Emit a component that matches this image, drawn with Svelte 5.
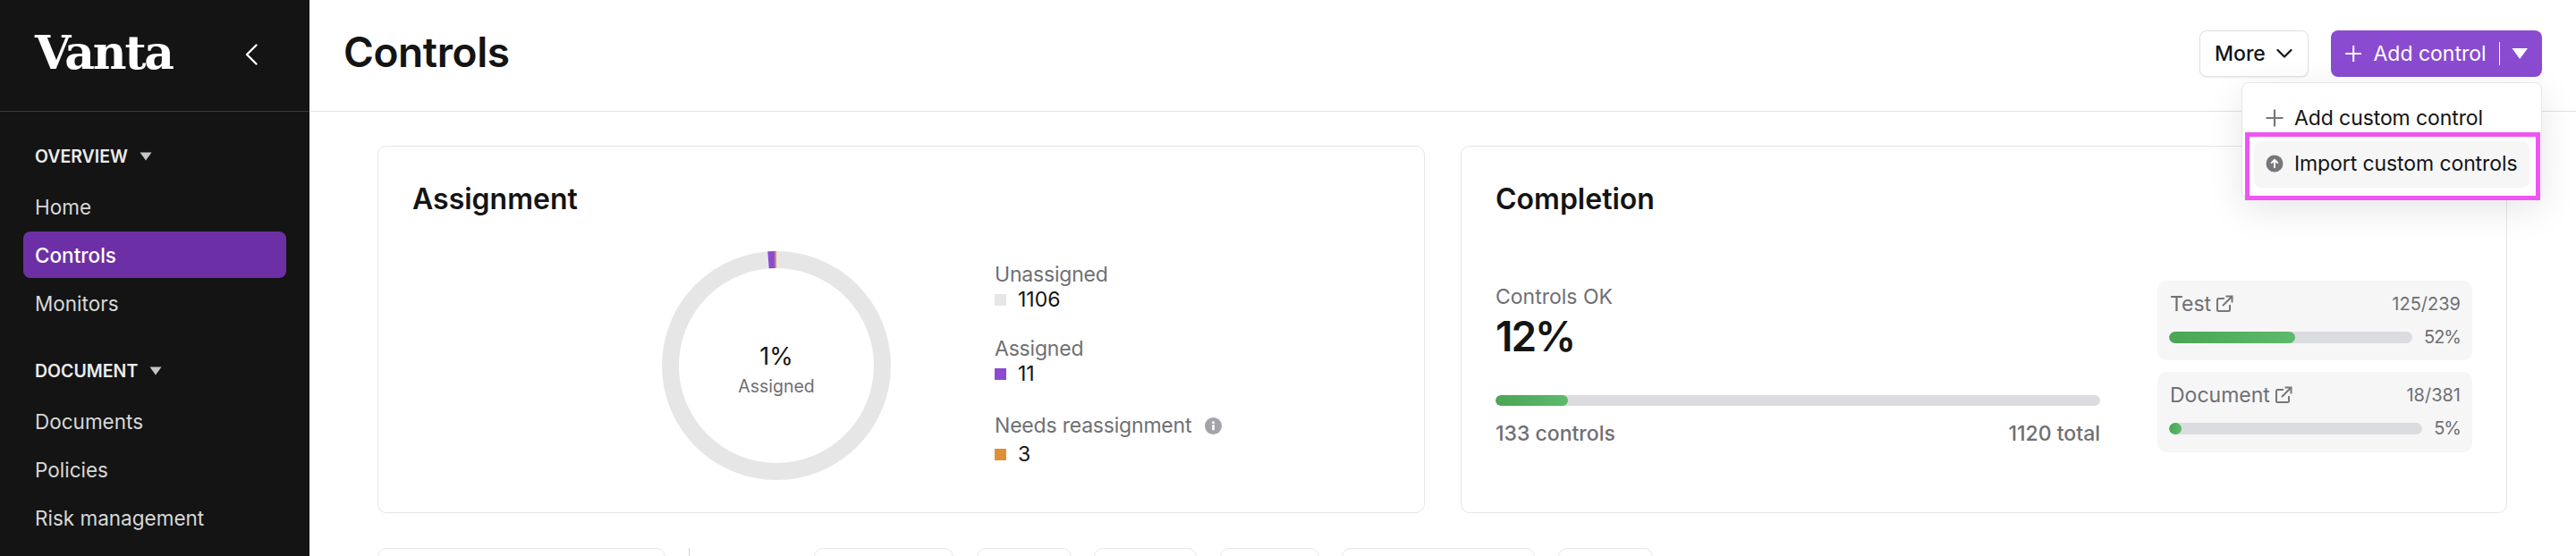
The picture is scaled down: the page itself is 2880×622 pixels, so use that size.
<script>
  const navGroups = [
    { title: 'OVERVIEW', items: ['Home', 'Controls', 'Monitors'] },
    { title: 'DOCUMENT', items: ['Documents', 'Policies', 'Risk management'] }
  ];

  const legend = [
    { label: 'Unassigned', value: 1106, color: '#e6e6e6' },
    { label: 'Assigned', value: 11, color: '#8a4bd0' },
    { label: 'Needs reassignment', value: 3, color: '#dd9038', info: true }
  ];

  const subStats = [
    { label: 'Test', count: '125/239', pct: 52 },
    { label: 'Document', count: '18/381', pct: 5 }
  ];

  const chips = [156, 106, 115, 111, 216, 106];

  // donut geometry, segments run back from 12 o'clock
  const radius = 118.5;
  const circ = 2 * Math.PI * radius;
  const total = 1120;
  const orangeLen = (3 / total) * circ;
  const purpleLen = (11 / total) * circ;
</script>

<div class="page">
  <aside class="sidebar">
    <div class="brand">
      <span class="logo">Vanta</span>
      <svg class="collapse" width="14" height="24" viewBox="0 0 14 24" fill="none" stroke="#fff" stroke-width="2.4" stroke-linecap="round" stroke-linejoin="round">
        <path d="M12.5 1.5 2 12l10.5 10.5" />
      </svg>
    </div>
    <nav class="nav">
      {#each navGroups as group}
        <section class="group">
          <div class="group-title">
            {group.title}
            <svg width="14" height="10" viewBox="0 0 14 10"><path d="M0.5 0.5h13L7 9.5z" fill="#c6c6c6" /></svg>
          </div>
          {#each group.items as item}
            <a class="nav-item" class:active={item === 'Controls'} href="#top">{item}</a>
          {/each}
        </section>
      {/each}
    </nav>
  </aside>

  <main class="main">
    <header class="topbar">
      <h1>Controls</h1>
      <div class="actions">
        <button class="btn-more">
          More
          <svg width="18" height="12" viewBox="0 0 18 12" fill="none" stroke="#141414" stroke-width="2.2" stroke-linecap="round" stroke-linejoin="round"><path d="M1.5 2 9 9.5 16.5 2" /></svg>
        </button>
        <button class="btn-add">
          <svg width="20" height="20" viewBox="0 0 20 20" fill="none" stroke="#fff" stroke-width="2.2" stroke-linecap="round"><path d="M10 1v18M1 10h18" /></svg>
          <span>Add control</span>
          <i class="btn-divider"></i>
          <svg width="20" height="14" viewBox="0 0 20 14"><path d="M0.5 0.5h19L10 13.5z" fill="#fff" /></svg>
        </button>
      </div>

      <div class="menu">
        <div class="menu-item">
          <svg width="20" height="20" viewBox="0 0 20 20" fill="none" stroke="#77777b" stroke-width="2.2"><path d="M10 0.5v19M0.5 10h19" /></svg>
          Add custom control
        </div>
        <div class="menu-item hover">
          <svg width="20" height="20" viewBox="0 0 20 20">
            <circle cx="10" cy="10" r="9.5" fill="#77777b" />
            <path d="M10 15V6M6.2 9.6 10 5.8l3.8 3.8" fill="none" stroke="#fff" stroke-width="2" />
          </svg>
          Import custom controls
        </div>
      </div>
      <div class="callout"></div>
    </header>

    <div class="content">
      <div class="cards">
        <section class="card">
          <h2>Assignment</h2>
          <div class="assign-row">
            <div class="donut">
              <svg width="256" height="256" viewBox="0 0 256 256" fill="none" stroke-width="19">
                <circle cx="128" cy="128" r={radius} stroke="#e6e6e6" />
                <g transform="rotate(-90 128 128)">
                  <circle cx="128" cy="128" r={radius} stroke="#dd9038" stroke-dasharray="{orangeLen} {circ - orangeLen}" stroke-dashoffset={orangeLen} />
                  <circle cx="128" cy="128" r={radius} stroke="#8a4bd0" stroke-dasharray="{purpleLen} {circ - purpleLen}" stroke-dashoffset={orangeLen + purpleLen} />
                </g>
              </svg>
              <div class="donut-label">
                <strong>1%</strong>
                <span>Assigned</span>
              </div>
            </div>
            <ul class="legend">
              {#each legend as row}
                <li>
                  <div class="legend-label">
                    {row.label}
                    {#if row.info}
                      <svg width="19" height="19" viewBox="0 0 19 19">
                        <circle cx="9.5" cy="9.5" r="9.5" fill="#a3a3a8" />
                        <rect x="8.2" y="8.2" width="2.6" height="6" fill="#fff" />
                        <rect x="8.2" y="4.4" width="2.6" height="2.6" fill="#fff" />
                      </svg>
                    {/if}
                  </div>
                  <div class="legend-value"><i style="background:{row.color}"></i>{row.value}</div>
                </li>
              {/each}
            </ul>
          </div>
        </section>

        <section class="card">
          <h2>Completion</h2>
          <div class="completion-row">
            <div class="overall">
              <div class="overall-label">Controls OK</div>
              <div class="overall-pct">12%</div>
              <div class="track big"><div class="fill" style="width:12%"></div></div>
              <div class="overall-foot"><span>133 controls</span><span>1120 total</span></div>
            </div>
            <div class="subs">
              {#each subStats as stat}
                <div class="sub">
                  <div class="sub-top">
                    <span class="sub-name">
                      {stat.label}
                      <svg width="20" height="20" viewBox="0 0 20 20" fill="none" stroke="#77777b" stroke-width="2">
                        <path d="M10 4H3.5A1.5 1.5 0 0 0 2 5.500V16.500A1.500 1.500 0 0 0 3.500 18H14.500A1.500 1.500 0 0 0 16 16.500V11" />
                        <path d="M8 12 18 2M11.500 1.500H18.500V8.500" />
                      </svg>
                    </span>
                    <span>{stat.count}</span>
                  </div>
                  <div class="sub-bar">
                    <div class="track"><div class="fill" style="width:{stat.pct}%"></div></div>
                    <span>{stat.pct}%</span>
                  </div>
                </div>
              {/each}
            </div>
          </div>
        </section>
      </div>

      <div class="filters">
        <div class="search"></div>
        <div class="filter-divider"></div>
        <div class="chips">
          {#each chips as width}
            <div class="chip" style="width:{width}px"></div>
          {/each}
        </div>
      </div>
    </div>
  </main>
</div>

<style>
  :global(body) {
    margin: 0;
    background: #fff;
    font-family: Inter, "Noto Sans", sans-serif;
    color: #141414;
  }

  .page {
    display: flex;
    height: 622px;
    overflow: hidden;
  }

  .sidebar {
    width: 346px;
    flex-shrink: 0;
    background: #141414;
    color: #d8d8d8;
  }

  .brand {
    height: 124px;
    box-sizing: content-box;
    border-bottom: 1px solid #3a3a3a;
    display: flex;
    align-items: center;
    justify-content: space-between;
    padding: 0 58px 0 39px;
  }

  .logo {
    font-family: "DejaVu Serif", serif;
    font-weight: 700;
    font-size: 52px;
    letter-spacing: -2.2px;
    color: #fff;
    line-height: 1;
    margin-top: -6px;
  }

  .collapse {
    margin-top: -2px;
  }

  .nav {
    padding: 35px 26px 0;
  }

  .group {
    margin-bottom: 35px;
  }

  .group-title {
    display: flex;
    align-items: center;
    gap: 13px;
    height: 30px;
    padding-left: 13px;
    margin-bottom: 15px;
    font-size: 19.5px;
    font-weight: 600;
    color: #ececec;
  }

  .nav-item {
    display: flex;
    align-items: center;
    height: 52px;
    margin-bottom: 2px;
    padding-left: 13px;
    border-radius: 8px;
    font-size: 22.5px;
    color: #d8d8d8;
    text-decoration: none;
  }

  .nav-item.active {
    background: #6d2fa5;
    color: #fff;
    font-weight: 500;
  }

  .main {
    flex: 1;
    min-width: 0;
  }

  .topbar {
    position: relative;
    height: 124px;
    box-sizing: content-box;
    border-bottom: 1px solid #e2e2e2;
    display: flex;
    align-items: center;
    justify-content: space-between;
    padding: 0 38px 0 38px;
  }

  h1 {
    margin: -8px 0 0;
    font-size: 46px;
    font-weight: 600;
    letter-spacing: -0.4px;
  }

  .actions {
    display: flex;
    gap: 25px;
    margin-top: -4px;
  }

  button {
    display: flex;
    align-items: center;
    height: 52px;
    border-radius: 8px;
    font-family: inherit;
    font-size: 23px;
    font-weight: 450;
    white-space: nowrap;
    box-sizing: border-box;
    cursor: pointer;
  }

  .btn-more {
    width: 122px;
    padding: 0 17px 0 16px;
    justify-content: space-between;
    background: #fff;
    color: #141414;
    border: 1px solid #e0e0e0;
    box-shadow: 0 1px 2px rgba(0, 0, 0, 0.08);
  }

  .btn-add {
    width: 236px;
    padding: 0 16px;
    gap: 13px;
    background: #8a4bd0;
    color: #fff;
    border: 0;
    font-weight: 400;
  }

  .btn-divider {
    width: 1px;
    height: 26px;
    margin: 0 0 0 1px;
    background: #fff;
  }

  .menu {
    position: absolute;
    top: 92px;
    right: 38px;
    width: 336px;
    height: 130px;
    box-sizing: border-box;
    padding: 14px 13px 0;
    background: #fff;
    border: 1px solid #e6e6e6;
    border-radius: 8px;
    box-shadow: 0 12px 40px rgba(0, 0, 0, 0.1);
    z-index: 2;
  }

  .menu-item {
    display: flex;
    align-items: center;
    gap: 12px;
    height: 52px;
    padding: 0 0 2px 13px;
    box-sizing: border-box;
    margin-bottom: -1px;
    border-radius: 8px;
    font-size: 23px;
    letter-spacing: -0.1px;
    white-space: nowrap;
  }

  .menu-item.hover {
    background: #f6f6f7;
  }

  .callout {
    position: absolute;
    top: 148px;
    right: 40px;
    width: 330px;
    height: 76px;
    box-sizing: border-box;
    border: 5px solid #ee55f2;
    z-index: 3;
  }

  .content {
    padding: 38px 77px 0 76px;
  }

  .cards {
    display: grid;
    grid-template-columns: 1171px 1170px;
    gap: 40px;
  }

  .card {
    height: 411px;
    box-sizing: border-box;
    padding: 39px 38px 0 38px;
    border: 1px solid #e6e6e6;
    border-radius: 10px;
    background: #fff;
  }

  h2 {
    margin: 0;
    font-size: 32px;
    font-weight: 600;
    line-height: 40px;
  }

  .assign-row {
    display: flex;
    margin: 38px 0 0 279px;
  }

  .donut {
    position: relative;
    width: 256px;
    height: 256px;
    flex-shrink: 0;
  }

  .donut svg {
    display: block;
  }

  .donut-label {
    position: absolute;
    inset: 0;
    display: flex;
    flex-direction: column;
    align-items: center;
    justify-content: center;
    padding-top: 9px;
    box-sizing: border-box;
  }

  .donut-label strong {
    font-size: 27px;
    font-weight: 400;
    line-height: 36px;
  }

  .donut-label span {
    font-size: 19.5px;
    line-height: 30px;
    color: #6f6f73;
  }

  .legend {
    list-style: none;
    margin: 11px 0 0 116px;
    padding: 0;
    display: flex;
    flex-direction: column;
    gap: 26px;
  }

  .legend li:last-child {
    margin-top: 3px;
  }

  .legend li:last-child .legend-label {
    margin-bottom: 4px;
  }

  .legend-label {
    display: flex;
    align-items: center;
    gap: 15px;
    font-size: 23px;
    letter-spacing: -0.2px;
    line-height: 30px;
    color: #6f6f73;
  }

  .legend-value {
    display: flex;
    align-items: center;
    gap: 13px;
    font-size: 23px;
    line-height: 27px;
    font-weight: 400;
  }

  .legend-value i {
    width: 13px;
    height: 13px;
    flex-shrink: 0;
  }

  .completion-row {
    display: flex;
    gap: 64px;
    margin-top: 71px;
  }

  .overall {
    width: 676px;
    padding-top: 3px;
  }

  .overall-label {
    font-size: 23px;
    line-height: 30px;
    color: #6f6f73;
  }

  .overall-pct {
    font-size: 46px;
    font-weight: 600;
    letter-spacing: -2px;
    line-height: 56px;
    margin: 1px 0 38px;
  }

  .track {
    flex: 1;
    height: 13px;
    border-radius: 7px;
    background: #dbdce0;
    overflow: hidden;
  }

  .track.big {
    height: 12px;
  }

  .fill {
    height: 100%;
    border-radius: 7px;
    background: linear-gradient(90deg, #4aa655, #5db96c);
  }

  .overall-foot {
    display: flex;
    justify-content: space-between;
    margin-top: 16px;
    font-size: 23px;
    font-weight: 500;
    line-height: 30px;
    color: #6f6f73;
  }

  .subs {
    width: 352px;
    display: flex;
    flex-direction: column;
    gap: 13px;
  }

  .sub {
    height: 90px;
    box-sizing: border-box;
    padding: 12px 13px 0 13px;
    border-radius: 10px;
    background: #f6f6f7;
    color: #6f6f73;
  }

  .sub:first-child {
    height: 89px;
  }

  .sub-top {
    display: flex;
    justify-content: space-between;
    align-items: center;
    height: 28px;
    font-size: 20px;
  }

  .sub-name {
    display: flex;
    align-items: center;
    gap: 5px;
    font-size: 23px;
    padding-left: 1px;
  }

  .sub-bar {
    display: flex;
    align-items: center;
    gap: 13px;
    margin-top: 9px;
    font-size: 20px;
    height: 28px;
  }

  .sub-bar span {
    letter-spacing: -1px;
  }

  .filters {
    display: flex;
    margin-top: 39px;
    height: 40px;
  }

  .search {
    width: 322px;
    border: 1px solid #e6e6e6;
    border-radius: 10px;
    box-sizing: border-box;
  }

  .filter-divider {
    width: 1px;
    margin: 0 139px 0 26px;
    background: #d4d4d4;
  }

  .chips {
    display: flex;
    gap: 25.5px;
  }

  .chip {
    height: 40px;
    box-sizing: border-box;
    border: 1px solid #e6e6e6;
    border-radius: 10px;
  }
</style>
